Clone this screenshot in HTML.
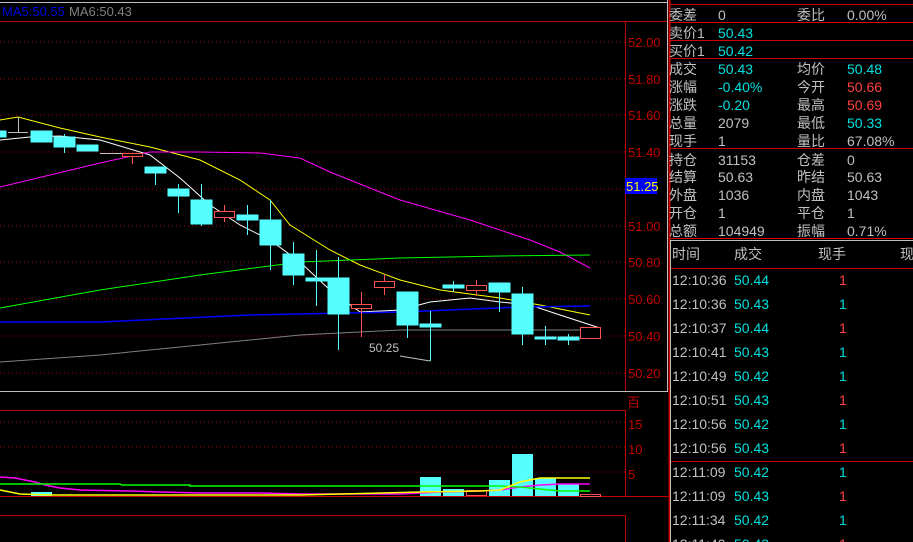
<!DOCTYPE html><html><head><meta charset="utf-8"><style>
html,body{margin:0;padding:0;background:#000;width:913px;height:542px;overflow:hidden}
svg{display:block}
text{font-family:"Liberation Sans","Noto Sans CJK SC",sans-serif}
</style></head><body>
<svg width="913" height="542" viewBox="0 0 913 542" xmlns="http://www.w3.org/2000/svg">
<!-- frame lines -->
<line x1="0" y1="2.5" x2="667" y2="2.5" stroke="#c0c0c0"/>
<line x1="0" y1="21.5" x2="667" y2="21.5" stroke="#c00000"/>
<line x1="625.5" y1="21" x2="625.5" y2="392" stroke="#c00000"/>
<line x1="0" y1="391.5" x2="667" y2="391.5" stroke="#c0c0c0"/>
<line x1="667.5" y1="0" x2="667.5" y2="392" stroke="#c0c0c0"/>
<line x1="669.5" y1="0" x2="669.5" y2="542" stroke="#d00000" stroke-width="2"/>
<line x1="0" y1="410.5" x2="625" y2="410.5" stroke="#c00000"/>
<line x1="625.5" y1="410" x2="625.5" y2="496" stroke="#c00000"/>
<line x1="0" y1="496.5" x2="669" y2="496.5" stroke="#c00000"/>
<line x1="0" y1="515.5" x2="625" y2="515.5" stroke="#c00000"/>
<line x1="625.5" y1="515" x2="625.5" y2="542" stroke="#c00000"/>
<text x="2" y="16" font-size="13" fill="#0000e0">MA5:50.55</text>
<text x="69" y="16" font-size="13" fill="#808080">MA6:50.43</text>
<!-- grid -->
<g stroke="#a00000" stroke-dasharray="1,3">
<line x1="0" y1="42" x2="625" y2="42"/><line x1="0" y1="79" x2="625" y2="79"/><line x1="0" y1="115" x2="625" y2="115"/><line x1="0" y1="152" x2="625" y2="152"/><line x1="0" y1="189" x2="625" y2="189"/><line x1="0" y1="226" x2="625" y2="226"/><line x1="0" y1="262" x2="625" y2="262"/><line x1="0" y1="299" x2="625" y2="299"/><line x1="0" y1="336" x2="625" y2="336"/><line x1="0" y1="373" x2="625" y2="373"/>
<line x1="0" y1="422" x2="625" y2="422"/><line x1="0" y1="447" x2="625" y2="447"/><line x1="0" y1="472" x2="625" y2="472"/>
</g>
<g font-size="13" fill="#c00000">
<text x="628" y="47">52.00</text><text x="628" y="84">51.80</text><text x="628" y="120">51.60</text><text x="628" y="157">51.40</text>
<text x="628" y="231">51.00</text><text x="628" y="267">50.80</text><text x="628" y="304">50.60</text><text x="628" y="341">50.40</text><text x="628" y="378">50.20</text>
<text x="627" y="407">百</text><text x="628" y="429">15</text><text x="628" y="454">10</text><text x="628" y="479">5</text>
</g>
<rect x="625" y="178" width="32" height="16" fill="#0000ff"/>
<text x="626" y="191" font-size="13" fill="#ffff00">51.25</text>
<!-- MA lines -->
<polyline fill="none" stroke="#ffff00" points="0,120 18,117 60,128 100,137 150,147 200,160 240,180 270,200 290,225 330,250 360,265 400,280 440,290 500,298 540,305 590,315"/>
<polyline fill="none" stroke="#ffffff" points="0,140 30,137 60,136 100,140 150,155 180,178 210,205 240,225 270,240 300,262 330,290 360,312 400,310 430,302 470,298 500,302 530,305 560,315 600,328"/>
<polyline fill="none" stroke="#ff00ff" points="0,187 50,175 100,163 150,152 200,152 260,153 300,158 330,172 400,200 470,220 530,240 560,252 590,268"/>
<polyline fill="none" stroke="#00ff00" points="0,308 100,290 200,275 300,262 400,258 500,256 590,255"/>
<polyline fill="none" stroke="#0000ff" stroke-width="1.5" points="0,322 100,322 250,315 400,312 520,307 590,306"/>
<polyline fill="none" stroke="#808080" points="0,362 100,355 200,345 300,335 400,330 500,330 590,330"/>
<polyline fill="none" stroke="#c0c0c0" points="400,356 430,361"/>
<text x="369" y="352" font-size="12" fill="#c0c0c0">50.25</text>
<!-- candles -->
<g stroke="#55ffff" fill="#55ffff">
<rect x="0" y="131" width="6" height="6"/>
<line x1="18.5" y1="117" x2="18.5" y2="132" stroke="#c0c0c0"/><line x1="8" y1="132.5" x2="28" y2="132.5" stroke="#c0c0c0"/>
<rect x="31" y="131" width="21" height="11"/>
<line x1="64.5" y1="134" x2="64.5" y2="153"/><rect x="54" y="137" width="21" height="10"/>
<rect x="77" y="145" width="21" height="6"/>
<line x1="155.5" y1="167" x2="155.5" y2="185"/><rect x="145" y="167" width="21" height="6"/>
<line x1="178.5" y1="184" x2="178.5" y2="213"/><rect x="168" y="189" width="21" height="7"/>
<line x1="201.5" y1="184" x2="201.5" y2="226"/><rect x="191" y="200" width="21" height="24"/>
<line x1="247.5" y1="205" x2="247.5" y2="235"/><rect x="237" y="215" width="21" height="5"/>
<line x1="270.5" y1="200" x2="270.5" y2="270"/><rect x="260" y="220" width="21" height="25"/>
<line x1="293.5" y1="242" x2="293.5" y2="285"/><rect x="283" y="254" width="21" height="21"/>
<line x1="316.5" y1="250" x2="316.5" y2="306"/><rect x="306" y="278" width="21" height="3"/>
<line x1="338.5" y1="257" x2="338.5" y2="350"/><rect x="328" y="278" width="21" height="36"/>
<line x1="407.5" y1="325" x2="407.5" y2="338"/><rect x="397" y="292" width="21" height="33"/>
<line x1="430.5" y1="311" x2="430.5" y2="361"/><rect x="420" y="324" width="21" height="3"/>
<line x1="453.5" y1="281" x2="453.5" y2="292"/><rect x="443" y="285" width="21" height="3"/>
<line x1="499.5" y1="283" x2="499.5" y2="312"/><rect x="489" y="283" width="21" height="9"/>
<line x1="522.5" y1="287" x2="522.5" y2="345"/><rect x="512" y="294" width="21" height="40"/>
<line x1="545.5" y1="326" x2="545.5" y2="345"/><rect x="535" y="337" width="21" height="2"/>
<line x1="568.5" y1="334" x2="568.5" y2="345"/><rect x="558" y="337" width="21" height="3"/>
</g>
<line x1="100" y1="153.5" x2="122" y2="153.5" stroke="#c0c0c0"/>
<g stroke="#ff5050" fill="none">
<line x1="132.5" y1="156" x2="132.5" y2="164"/><rect x="122.5" y="153.5" width="20" height="3" fill="#000"/>
<line x1="224.5" y1="205" x2="224.5" y2="222"/><rect x="214.5" y="211.5" width="20" height="6" fill="#000"/>
<line x1="361.5" y1="292" x2="361.5" y2="337"/><rect x="351.5" y="304.5" width="20" height="4" fill="#000"/>
<line x1="384.5" y1="274" x2="384.5" y2="295"/><rect x="374.5" y="281.5" width="20" height="6" fill="#000"/>
<line x1="476.5" y1="280" x2="476.5" y2="296"/><rect x="466.5" y="285.5" width="20" height="5" fill="#000"/>
<rect x="580.5" y="327.5" width="20" height="11" fill="#000"/>
</g>
<!-- volume -->
<g fill="#55ffff">
<rect x="31" y="492" width="21" height="4"/><rect x="420" y="477" width="21" height="19"/><rect x="443" y="489" width="21" height="7"/>
<rect x="489" y="480" width="21" height="16"/><rect x="512" y="454" width="21" height="42"/><rect x="535" y="478" width="21" height="18"/><rect x="558" y="484" width="21" height="12"/>
</g>
<rect x="466.5" y="490.5" width="20" height="5" fill="none" stroke="#ff5050"/>
<rect x="580.5" y="494.5" width="20" height="2" fill="none" stroke="#ff5050"/>
<polyline fill="none" stroke="#ff00ff" stroke-width="1.5" points="0,477 15,478 25,480 35,482 45,485 60,488 80,490 130,491 160,492 200,493 260,493 300,494 400,494 420,493 440,492 480,491 500,490 520,487 540,485 560,484 590,484"/>
<polyline fill="none" stroke="#00ff00" stroke-width="1.5" points="0,484 120,484 122,485 190,485 190,486 400,486 500,486 520,487 560,491 590,491"/>
<polyline fill="none" stroke="#ffff00" stroke-width="1.5" points="0,490 10,492 20,494 50,495 300,495 420,492 480,491 500,490 520,482 540,478 590,478"/>
<!-- right panel -->
<g stroke="#d00000">
<line x1="669" y1="4.5" x2="913" y2="4.5"/><line x1="669" y1="22.5" x2="913" y2="22.5"/><line x1="669" y1="40.5" x2="913" y2="40.5"/><line x1="669" y1="58.5" x2="913" y2="58.5"/><line x1="669" y1="148.5" x2="913" y2="148.5"/><line x1="669" y1="238.5" x2="913" y2="238.5"/><line x1="669" y1="268.5" x2="913" y2="268.5"/><line x1="669" y1="461.5" x2="913" y2="461.5"/>
</g>
<rect x="670.5" y="240.5" width="250" height="310" fill="none" stroke="#c0c0c0"/>
<g font-size="14" fill="#c0c0c0">
<text x="669" y="20">委差</text><text x="718" y="20">0</text><text x="797" y="20">委比</text><text x="847" y="20">0.00%</text>
<text x="669" y="38">卖价1</text><text x="669" y="56">买价1</text>
<text x="669" y="74">成交</text><text x="797" y="74">均价</text>
<text x="669" y="92">涨幅</text><text x="797" y="92">今开</text>
<text x="669" y="110">涨跌</text><text x="797" y="110">最高</text>
<text x="669" y="128">总量</text><text x="718" y="128">2079</text><text x="797" y="128">最低</text>
<text x="669" y="146">现手</text><text x="718" y="146">1</text><text x="797" y="146">量比</text><text x="847" y="146">67.08%</text>
<text x="669" y="165">持仓</text><text x="718" y="165">31153</text><text x="797" y="165">仓差</text><text x="847" y="165">0</text>
<text x="669" y="182">结算</text><text x="718" y="182">50.63</text><text x="797" y="182">昨结</text><text x="847" y="182">50.63</text>
<text x="669" y="200">外盘</text><text x="718" y="200">1036</text><text x="797" y="200">内盘</text><text x="847" y="200">1043</text>
<text x="669" y="218">开仓</text><text x="718" y="218">1</text><text x="797" y="218">平仓</text><text x="847" y="218">1</text>
<text x="669" y="236">总额</text><text x="718" y="236">104949</text><text x="797" y="236">振幅</text><text x="847" y="236">0.71%</text>
<text x="672" y="259">时间</text><text x="734" y="259">成交</text><text x="818" y="259">现手</text><text x="900" y="259">现</text>
</g>
<g font-size="14" fill="#00e0e0">
<text x="718" y="38">50.43</text><text x="718" y="56">50.42</text><text x="718" y="74">50.43</text><text x="847" y="74">50.48</text>
<text x="718" y="92">-0.40%</text><text x="718" y="110">-0.20</text><text x="847" y="128">50.33</text>
</g>
<g font-size="14" fill="#ff4040"><text x="847" y="92">50.66</text><text x="847" y="110">50.69</text></g>
<g font-size="14">
<g fill="#c0c0c0">
<text x="672" y="285">12:10:36</text><text x="672" y="309">12:10:36</text><text x="672" y="333">12:10:37</text><text x="672" y="357">12:10:41</text><text x="672" y="381">12:10:49</text><text x="672" y="405">12:10:51</text><text x="672" y="429">12:10:56</text><text x="672" y="453">12:10:56</text><text x="672" y="477">12:11:09</text><text x="672" y="501">12:11:09</text><text x="672" y="525">12:11:34</text><text x="672" y="549">12:11:40</text>
</g>
<g fill="#00e0e0">
<text x="734" y="285">50.44</text><text x="734" y="309">50.43</text><text x="734" y="333">50.44</text><text x="734" y="357">50.43</text><text x="734" y="381">50.42</text><text x="734" y="405">50.43</text><text x="734" y="429">50.42</text><text x="734" y="453">50.43</text><text x="734" y="477">50.42</text><text x="734" y="501">50.43</text><text x="734" y="525">50.42</text><text x="734" y="549">50.43</text>
<text x="839" y="309">1</text><text x="839" y="357">1</text><text x="839" y="381">1</text><text x="839" y="429">1</text><text x="839" y="477">1</text><text x="839" y="525">1</text>
</g>
<g fill="#ff4040">
<text x="839" y="285">1</text><text x="839" y="333">1</text><text x="839" y="405">1</text><text x="839" y="453">1</text><text x="839" y="501">1</text><text x="839" y="549">1</text>
</g>
</g>
</svg>
</body></html>
